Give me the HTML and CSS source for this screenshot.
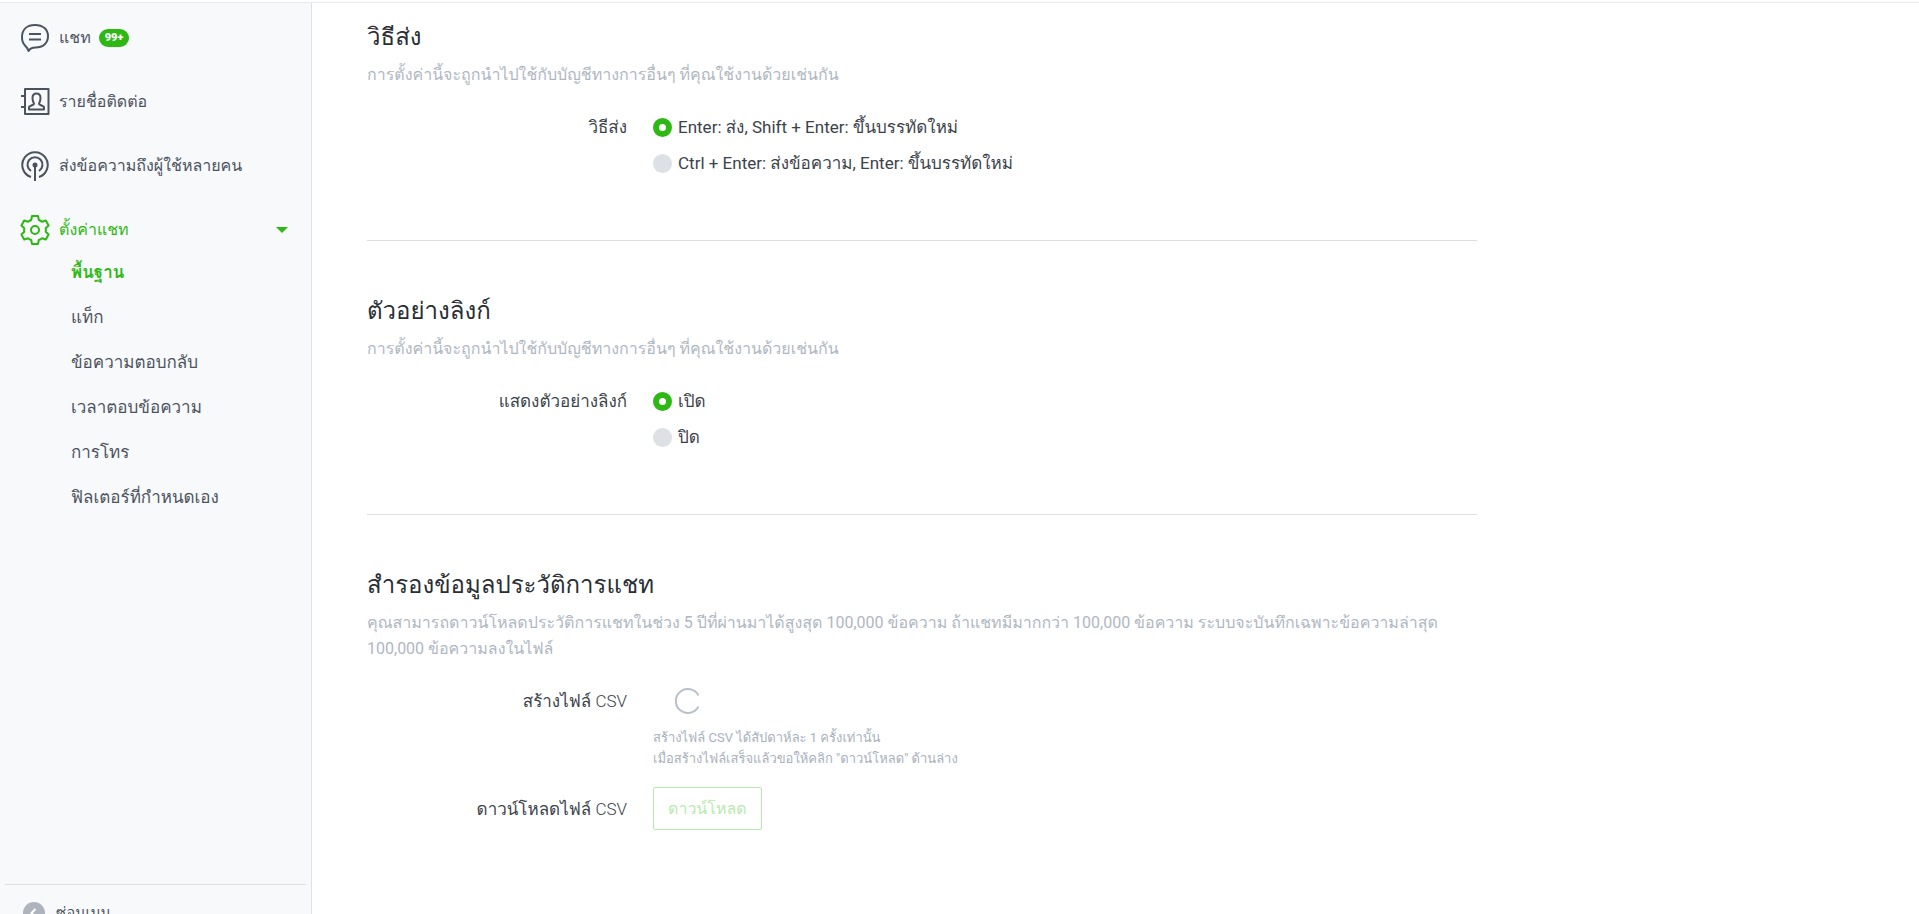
FILE: index.html
```html
<!DOCTYPE html>
<html lang="th">
<head>
    <meta charset="UTF-8">
    <meta name="viewport" content="width=device-width, initial-scale=1.0">
    <title>ตั้งค่าแชท</title>
    <link rel="stylesheet" href="styles.css">
</head>
<body>
    <div class="page">
        <nav class="sidebar">
            <ul class="menu">
                <li>
                    <a class="menu-link" href="#chat">
                        <svg class="icon" viewBox="0 0 30 32" aria-hidden="true">
                            <path d="M5 23.500C2.800 21.300 2 18.500 2 15.300C2 7.500 7 3 15 3S28 7.500 28 14.300S23 25.500 15.500 25.500C12 25.500 10 26.300 8.500 29C8 27 7 25.500 5 23.500Z"/>
                            <path d="M9 12H21M9 17.500H21"/>
                        </svg>
                        <span>แชท</span>
                        <span class="badge">99+</span>
                    </a>
                </li>
                <li>
                    <a class="menu-link" href="#contacts">
                        <svg class="icon" viewBox="0 0 30 32" aria-hidden="true">
                            <path d="M5 3H28.500V28H5ZM1 10H5M1 21H5"/>
                            <path d="M9 23.500V21C9 20 14 19 14 18C14 17 12.500 15.500 12.500 12C12.500 9 14 7.500 16.500 7.500S20.500 9 20.500 12C20.500 15.500 19 17 19 18C19 19 24 20 24 21V23.500Z"/>
                        </svg>
                        <span>รายชื่อติดต่อ</span>
                    </a>
                </li>
                <li>
                    <a class="menu-link" href="#broadcast">
                        <svg class="icon" viewBox="0 0 30 32" aria-hidden="true">
                            <path d="M11 27A12.700 12.700 0 1 1 19 27"/>
                            <path d="M11 21A7.500 7.500 0 1 1 19 21"/>
                            <path d="M15 15V31"/>
                            <circle class="fill" cx="15" cy="15" r="2.500"/>
                        </svg>
                        <span>ส่งข้อความถึงผู้ใช้หลายคน</span>
                    </a>
                </li>
                <li>
                    <a class="menu-link open" href="#settings">
                        <svg class="icon" viewBox="0 0 30 32" aria-hidden="true">
                            <path d="M12 2H18L18.800 6C20 6.400 21 7 22 7.800L25.800 6.500L28.600 11.600L25.700 14.300C26 15.500 26 16.500 25.700 17.700L28.600 20.400L25.800 25.500L22 24.200C21 25 20 25.600 18.800 26L18 30H12L11.200 26C10 25.600 9 25 8 24.200L4.200 25.500L1.400 20.400L4.300 17.700C4 16.500 4 15.500 4.300 14.300L1.400 11.600L4.200 6.500L8 7.800C9 7 10 6.400 11.200 6Z"/>
                            <circle cx="15" cy="16" r="4"/>
                        </svg>
                        <span>ตั้งค่าแชท</span>
                        <span class="caret"></span>
                    </a>
                    <ul class="submenu">
                        <li><a class="current" href="#basic">พื้นฐาน</a></li>
                        <li><a href="#tags">แท็ก</a></li>
                        <li><a href="#replies">ข้อความตอบกลับ</a></li>
                        <li><a href="#hours">เวลาตอบข้อความ</a></li>
                        <li><a href="#calls">การโทร</a></li>
                        <li><a href="#filters">ฟิลเตอร์ที่กำหนดเอง</a></li>
                    </ul>
                </li>
            </ul>
            <button class="collapse" type="button">
                <svg class="collapse-icon" viewBox="0 0 22 22" aria-hidden="true">
                    <circle cx="11" cy="11" r="11"/>
                    <path d="M12.500 7L8.500 11L12.500 15"/>
                </svg>
                <span>ซ่อนเมนู</span>
            </button>
        </nav>

        <main class="content">
            <section class="section">
                <h2>วิธีส่ง</h2>
                <p class="desc">การตั้งค่านี้จะถูกนำไปใช้กับบัญชีทางการอื่นๆ ที่คุณใช้งานด้วยเช่นกัน</p>
                <div class="row" role="radiogroup" aria-labelledby="sendLabel">
                    <div class="row-label" id="sendLabel">วิธีส่ง</div>
                    <div class="options">
                        <label><input type="radio" name="send" checked>Enter: ส่ง, Shift + Enter: ขึ้นบรรทัดใหม่</label>
                        <label><input type="radio" name="send">Ctrl + Enter: ส่งข้อความ, Enter: ขึ้นบรรทัดใหม่</label>
                    </div>
                </div>
            </section>

            <section class="section">
                <h2>ตัวอย่างลิงก์</h2>
                <p class="desc">การตั้งค่านี้จะถูกนำไปใช้กับบัญชีทางการอื่นๆ ที่คุณใช้งานด้วยเช่นกัน</p>
                <div class="row" role="radiogroup" aria-labelledby="previewLabel">
                    <div class="row-label" id="previewLabel">แสดงตัวอย่างลิงก์</div>
                    <div class="options">
                        <label><input type="radio" name="preview" checked>เปิด</label>
                        <label><input type="radio" name="preview">ปิด</label>
                    </div>
                </div>
            </section>

            <section class="section">
                <h2>สำรองข้อมูลประวัติการแชท</h2>
                <p class="desc">คุณสามารถดาวน์โหลดประวัติการแชทในช่วง 5 ปีที่ผ่านมาได้สูงสุด 100,000 ข้อความ ถ้าแชทมีมากกว่า 100,000 ข้อความ ระบบจะบันทึกเฉพาะข้อความล่าสุด 100,000 ข้อความลงในไฟล์</p>
                <div class="row">
                    <div class="row-label">สร้างไฟล์ <span class="light">CSV</span></div>
                    <div>
                        <svg class="spinner" viewBox="0 0 26 26" aria-hidden="true">
                            <path d="M23.500 7.500A12 12 0 1 0 23.500 18.500"/>
                        </svg>
                        <p class="note">สร้างไฟล์ CSV ได้สัปดาห์ละ 1 ครั้งเท่านั้น<br>เมื่อสร้างไฟล์เสร็จแล้วขอให้คลิก "ดาวน์โหลด" ด้านล่าง</p>
                    </div>
                </div>
                <div class="row download-row">
                    <label class="row-label" for="download">ดาวน์โหลดไฟล์ <span class="light">CSV</span></label>
                    <button class="download" id="download" type="button" disabled>ดาวน์โหลด</button>
                </div>
            </section>
        </main>
    </div>
</body>
</html>
```

FILE: styles.css
```css
* {
    box-sizing: border-box;
}
body {
    margin: 0;
    height: 100vh;
    overflow: hidden;
    font-family: Roboto, Tahoma, Loma, Waree, Garuda, sans-serif;
    font-size: 17px;
    line-height: 26px;
    color: #3c424b;
    background: #fff;
}
h2, p, ul {
    margin: 0;
    padding: 0;
}
ul {
    list-style: none;
}
a {
    color: inherit;
    text-decoration: none;
}
.page {
    display: flex;
    border-top: 1px solid #e9ebee;
    margin-top: 2px;
}
.sidebar {
    display: flex;
    flex-direction: column;
    width: 312px;
    height: calc(100vh + 23px);
    padding: 3px 5px 0;
    background: #f8f9fb;
    border-right: 1px solid #dfe1e5;
    flex-shrink: 0;
    color: #4b535e;
}
.menu {
    flex: 1;
}
.menu-link {
    display: flex;
    align-items: center;
    height: 64px;
    padding: 0 18px 0 15px;
    font-size: 16px;
}
.icon {
    width: 30px;
    height: 32px;
    margin-right: 9px;
    fill: none;
    stroke: currentColor;
    stroke-width: 2;
    stroke-linejoin: round;
}
.icon .fill {
    fill: currentColor;
    stroke: none;
}
.badge {
    margin-left: 8px;
    padding: 0 6px;
    border-radius: 9px;
    background: #2db814;
    color: #fff;
    font-size: 11px;
    font-weight: 900;
    line-height: 18px;
}
.open, .current {
    color: #2db814;
}
.caret {
    margin-left: auto;
    border: 6px solid transparent;
    border-top-color: #2db814;
    border-bottom: 0;
}
.submenu {
    margin-top: -12px;
}
.submenu a {
    display: block;
    padding-left: 66px;
    line-height: 45px;
}
.submenu .current {
    font-weight: bold;
}
.collapse {
    display: flex;
    align-items: center;
    height: 56px;
    padding: 0 18px;
    border: 0;
    border-top: 1px solid #dadde2;
    background: none;
    color: inherit;
    font: inherit;
    font-size: 15px;
}
.collapse-icon {
    width: 22px;
    height: 22px;
    margin-right: 11px;
    fill: #aeb4bd;
}
.collapse-icon path {
    fill: none;
    stroke: #fff;
    stroke-width: 2;
}
.content {
    flex: 1;
    max-width: 1221px;
    padding: 14px 56px 0 55px;
}
.section {
    padding-bottom: 64px;
    margin-bottom: 50px;
    border-bottom: 1px solid #dcdfe3;
}
.section:last-child {
    border-bottom: 0;
}
h2 {
    font-size: 24px;
    font-weight: normal;
    line-height: 40px;
    color: #2a2e35;
}
.desc {
    margin-top: 5px;
    font-size: 16px;
    color: #b0b7c2;
}
.row {
    display: flex;
    margin-top: 26px;
}
.row-label {
    width: 260px;
    margin-right: 26px;
    text-align: right;
}
.light {
    font-weight: 300;
}
.options {
    display: flex;
    flex-direction: column;
    gap: 10px;
}
.options label {
    display: flex;
    align-items: center;
}
input[type="radio"] {
    appearance: none;
    width: 19px;
    height: 19px;
    margin: 0 6px 0 0;
    border-radius: 50%;
    background: #dde0e5;
}
input[type="radio"]:checked {
    border: 6px solid #2db814;
    background: #fff;
}
.spinner {
    display: block;
    width: 26px;
    height: 26px;
    margin-left: 22px;
    fill: none;
    stroke: #bbc0ca;
    stroke-width: 2;
}
.note {
    margin-top: 13px;
    font-size: 13px;
    line-height: 21px;
    color: #a9b1bc;
}
.download-row {
    align-items: center;
    margin-top: 18px;
}
.download {
    height: 43px;
    padding: 0 14px;
    border: 1px solid #b9eab0;
    border-radius: 2px;
    background: #fff;
    color: #b9eab0;
    font: inherit;
    font-size: 16px;
}
```
